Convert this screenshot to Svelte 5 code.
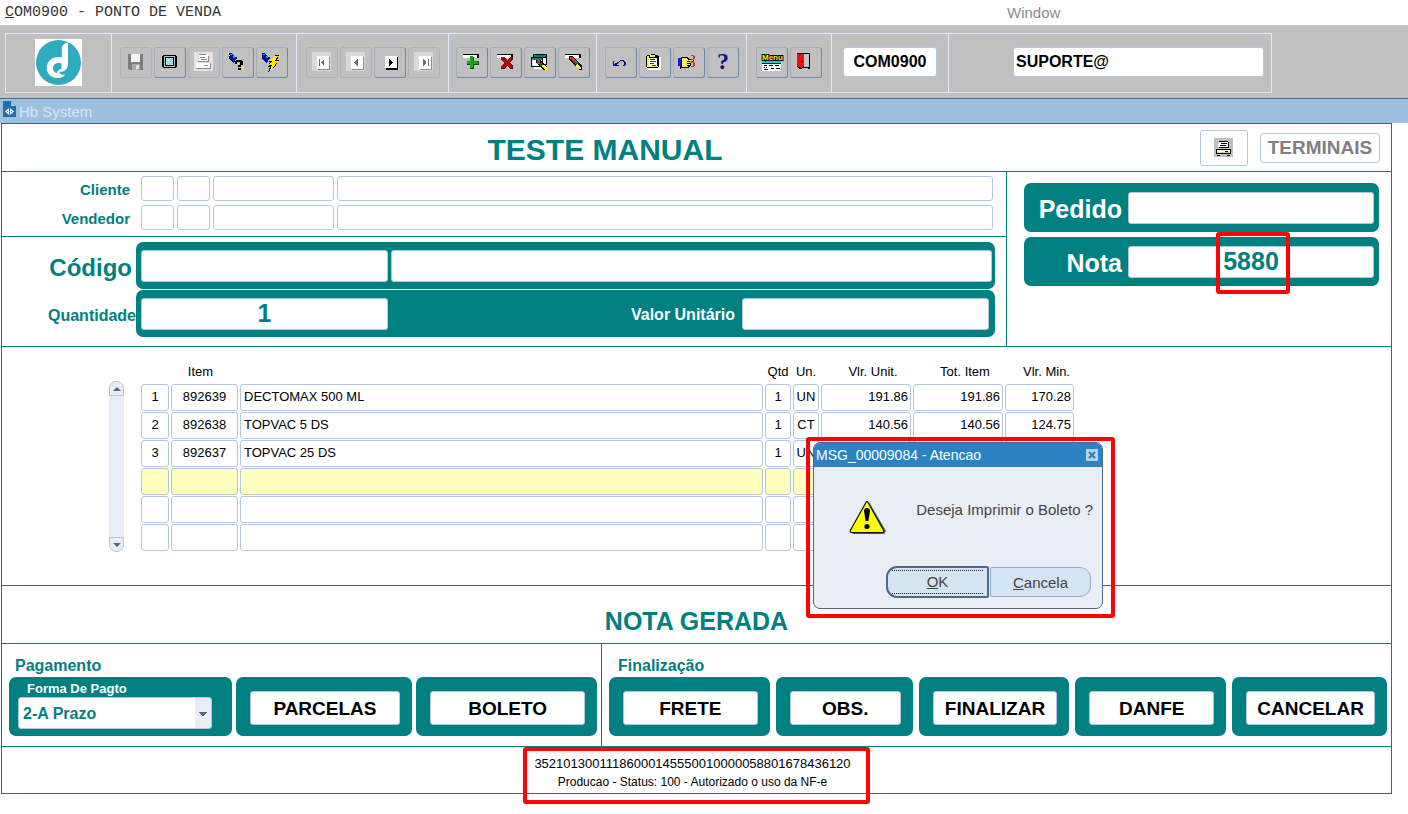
<script>
  const BLACK = '#000';
  const page = [['#8a8a8a', 'M6 5h12v13H6z'], ['#fff', 'M5 4h12v13H5z']];
  const pageOn = [[BLACK, 'M6 5h12v13H6z'], ['#fff', 'M5 4h12v12H5z']];
  const faded = ['#d9d9d9', 'M0 0h19v19H0z'];
  const bar = [[BLACK, 'M1 2h16v1H1zM15 3h2v3h-2z'], ['#fff', 'M1 3h14v3H1z']];

  // every icon is a list of [fill, path] layers on a 20x20 grid
  const icons = {
    save: [['#7d7d7d', 'M2 2h15v16H3l-1-1z'], ['#f4f4f4', 'M5 2h9v8H5z'], ['#a8a8a8', 'M6 12h8v6H6z'], ['#e0e0e0', 'M10 13h3v4h-3z']],
    monitor: [[BLACK, 'M3 3h13v1h1v11h-1v1H3v-1H2V4h1z'], ['#b8c0c0', 'M4 4h11v11H4z'], [BLACK, 'M5 5h9v9H5z'], ['#8fe0e6', 'M6 6h7v7H6z'], ['#fff', 'M6 6h1v1H6zM8 8h1v1H8zM10 6h1v1h-1zM12 8h1v1h-1zM6 10h1v1H6zM10 10h1v1h-1zM8 12h1v1H8zM12 12h1v1h-1z']],
    printOff: [['#e2e2e2', 'M0 0h19v19H0z'], ['#fff', 'M5 2h9v7H5zM2 11h15v5H2z'], ['#8a8a8a', 'M5 2h7v1H5zM6 5h5v1H6zM7 7h6v1H7zM14 4h1v6h-1zM4 9h11v1H4zM2 16h15v1H2zM16 11h1v5h-1zM10 13h4v1h-4z']],
    query: [['#08108c', 'M1 1h2l3 2v2h3v1l-3 5-2-1-3-3z'], ['#fff', 'M0 1h1v1H0zM1 3h1v1H1zM0 5h1v1H0z'], ['#20a8c8', 'M5 4h2v2H5zM2 2h2v1H2z'], ['#e5dc70', 'M9 12h1v1H9zM11 14h1v1h-1zM13 12h1v1h-1zM15 10h1v1h-1zM15 14h1v1h-1zM9 16h1v1H9zM13 16h1v1h-1zM15 18h1v1h-1zM11 18h1v1h-1zM13 14h3v4h-3z'], [BLACK, 'M8 8h6v1h1v4h-2v2h-3v-2h2v-3h-3v2H7V9h1zM10 16h3v2h-3z']],
    bolt: [['#08108c', 'M0 1h2l3 2v2h3v1l-3 5-2-1-3-3z'], ['#20a8c8', 'M4 4h2v2H4zM1 2h2v1H1z'], [BLACK, 'M13 3h4l-2 5h2l-3 5h1l-9 7 2-5H6l2-5H7z'], ['#ffee00', 'M12 4h4l-3 5h3l-4 4h2l-6 5 2-5H7l3-4H8z']],
    first: [faded, ...page, ['#6e6e6e', 'M7 7h1v7H7zM12 7v7l-3-3v-1z']],
    prev: [faded, ...page, ['#6e6e6e', 'M12 7v7l-4-3v-1z']],
    next: [...pageOn, [BLACK, 'M9 7v7l4-3v-1z']],
    last: [faded, ...page, ['#6e6e6e', 'M14 7h1v7h-1zM9 7v7l3-3v-1z']],
    add: [...bar, ['#064d06', 'M8 5h4v4h5v4h-5v4H8v-4H5V9h3z'], ['#16a516', 'M8 4h3v5h5v3h-5v4H8v-4H5V9h3z']],
    remove: [...bar, ['#5f0505', 'M5 5h3l3 3 3-3h3v2l-3 4 3 3v3h-3l-3-3-3 3H5v-2l4-4-4-4z'], ['#a80808', 'M5 5h3l3 3 3-3h2v2l-3 4 3 3v2h-2l-3-3-3 3H5v-2l3-3-3-4z']],
    clearForm: [[BLACK, 'M3 2h14v11H3z'], ['#0b7c80', 'M4 3h12v2H4z'], ['#fff', 'M4 6h12v6H4z'], [BLACK, 'M1 5h12v10H1z'], ['#0b7c80', 'M2 6h10v2H2z'], ['#fff', 'M2 8h10v6H2zM4 15h9v2H4z'], [BLACK, 'M6 8h4l7 7v3h-3l-8-7z'], ['#e0244c', 'M7 8h3v4H7z'], ['#128012', 'M10 11h2v3h-2z'], ['#ffee22', 'M12 13h2l3 3v2h-2l-3-3z']],
    clearField: [...bar, [BLACK, 'M5 4h4l9 10v4h-3L5 8z'], ['#e0244c', 'M6 5h3l2 3-2 2-3-3z'], ['#128012', 'M11 8l3 3-2 2-3-3z'], ['#ffee22', 'M13 12l4 3v2h-2l-4-3z']],
    undo: [['#10108c', 'M2 9h1v3h1v-1h2v-1h2V9h1V8h4v1h1v1h1v3h-1v1h-2v-1h1v-3h-1V9h-3v1H8v1H7v1H6v1h2v1H2z']],
    list: [['#fff', 'M3 5h13v13H3z'], [BLACK, 'M2 3h3l1-1h3l1 1h3v1h1v11h-1v1H2v-1H1V4h1z'], ['#f1ea7a', 'M2 4h2v10h9v1H2zM5 3h5v2H5z'], ['#fff', 'M4 6h8v8H4z'], ['#2030b0', 'M5 7h5v1H5zM5 9h6v1H5zM5 11h4v1H5zM7 13h4v1H7z']],
    hand: [[BLACK, 'M2 5h6l2 2h5v3H9l3 1v2l-2 3H3l-2 1z'], ['#1020c8', 'M-1 6h3v8h-3z'], ['#f6ec60', 'M3 6h4l2 2h5v1H8v1h3v1H8v1h3v1H8v1h1v1H3z'], ['#d83030', 'M12 3h3v1h1v3h-1v1h-3V7h2V4h-2zM12 10h3v1h1v3h-1v1h-3v-1h2v-3h-2zM11 9h4v1h-4z']],
    help: [],
    menu: [['#20c8d8', 'M0 9h19v2H0z'], [BLACK, 'M0 11h19v1H0z'], ['#fff', 'M0 12h19v7H0z'], [BLACK, 'M2 13h3v1H2zM7 13h4v1H7zM13 13h4v1h-4zM2 15h1v1H2zM4 15h1v1H4zM2 17h4v1H2zM9 16h3v1H9zM14 16h4v1h-4z']],
    exit: [[BLACK, 'M1 1h13v16h-2v-1H8l-4 1-3-2z'], ['#c4c4c4', 'M8 2h5v13H8z'], ['#ee1010', 'M1 2h7v12l-3 2-4-2z'], ['#7a0808', 'M5 9h2v1H5z']],
    print: [['#c0c0c0', 'M0 0h19v19H0z'], [BLACK, 'M5 3h9v1h1v6H5zM2 11h15v5H2zM3 17h3v1H3zM13 17h3v1h-3z'], ['#fff', 'M5 4h9v5H4zM3 12h13v2H3z'], [BLACK, 'M7 5h6v1H7zM6 7h6v1H6z'], ['#d8d080', 'M3 14h13v1H3z'], [BLACK, 'M11 13h3v1h-3z']],
  };

  const toolGroups = [
    [['save', 'Salvar', true], ['monitor', 'Tela'], ['printOff', 'Imprimir', true], ['query', 'Entrar consulta'], ['bolt', 'Executar consulta']],
    [['first', 'Primeiro', true], ['prev', 'Anterior', true], ['next', 'Proximo'], ['last', 'Ultimo', true]],
    [['add', 'Inserir'], ['remove', 'Excluir'], ['clearForm', 'Limpar tela'], ['clearField', 'Limpar registro']],
    [['undo', 'Desfazer'], ['list', 'Lista'], ['hand', 'Editar'], ['help', 'Ajuda']],
    [['menu', 'Menu'], ['exit', 'Sair']],
  ];

  const columns = [
    { key: 'seq', title: '', align: 'center' },
    { key: 'item', title: 'Item', align: 'center' },
    { key: 'desc', title: '', align: 'start' },
    { key: 'qtd', title: 'Qtd', align: 'center' },
    { key: 'un', title: 'Un.', align: 'center' },
    { key: 'unit', title: 'Vlr. Unit.', align: 'end' },
    { key: 'total', title: 'Tot. Item', align: 'end' },
    { key: 'min', title: 'Vlr. Min.', align: 'end' },
  ];

  let rows = $state([
    { seq: '1', item: '892639', desc: 'DECTOMAX 500 ML', qtd: '1', un: 'UN', unit: '191.86', total: '191.86', min: '170.28' },
    { seq: '2', item: '892638', desc: 'TOPVAC 5 DS', qtd: '1', un: 'CT', unit: '140.56', total: '140.56', min: '124.75' },
    { seq: '3', item: '892637', desc: 'TOPVAC 25 DS', qtd: '1', un: 'UN', unit: '', total: '', min: '' },
    {}, {}, {},
  ]);
  let current = $state(3);
  let showDialog = $state(true);
  let forma = $state('2-A Prazo');

  const finalActions = ['FRETE', 'OBS.', 'FINALIZAR', 'DANFE', 'CANCELAR'];
</script>

{#snippet icon(name)}
  <svg class="icon" viewBox="0 0 20 20" width="20" height="20" aria-hidden="true">
    {#each icons[name] as [fill, d]}
      <path {fill} {d} />
    {/each}
    {#if name === 'menu'}
      <text class="menu-text" x="0" y="8">Menu</text>
    {:else if name === 'help'}
      <text class="help-text" x="10" y="17">?</text>
    {/if}
  </svg>
{/snippet}

<div class="app">
  <nav class="menubar">
    <a href="#form" class="program"><u>C</u>OM0900 - PONTO DE VENDA</a>
    <a href="#window" class="window">Window</a>
  </nav>

  <div class="toolbar">
    <div class="tools">
      <div class="group">
        <svg class="logo" viewBox="0 0 47 47" width="47" height="47" role="img" aria-label="Logo">
          <rect width="47" height="47" fill="#fff" />
          <circle cx="23.5" cy="23.5" r="22.5" fill="#2eabbf" />
          <path fill="#fff" d="M33 3.500c-3 .3-6 2.500-6.200 6V18.500c-8-2-15 3-15 10.500 0 6 4.500 10 11 10 3.500 0 6-1.500 7.500-3.500-3 .8-5.300-.3-5.800-2.500 5 0 8.500-3 8.500-8z" />
          <path fill="#2eabbf" d="M26.500 24.500c-4.500-1.500-8.500.8-8.500 4.700 0 2.800 1.800 4.600 4.200 4.800 0-2 1.200-3.500 4.300-4.200z" />
        </svg>
      </div>
      {#each toolGroups as group}
        <div class="group">
          {#each group as [name, label, off]}
            <button class="tool" class:off aria-label={label} disabled={off}>{@render icon(name)}</button>
          {/each}
        </div>
      {/each}
      <div class="group"><input class="program-code" aria-label="Programa" value="COM0900" /></div>
      <div class="group user"><input class="user-name" aria-label="Usuario" value="SUPORTE@" /></div>
    </div>
  </div>

  <header class="titlebar">
    <svg viewBox="0 0 13 16" width="13" height="16" aria-hidden="true">
      <path fill="#1d6fb0" d="M0 0h8l5 5v11H0z" />
      <path fill="#9cc6e8" d="M8 0l5 5H8z" />
      <path fill="#fff" d="M6 7v7l-4-3.500zM7 7v7l4-3.500z" />
      <path fill="#1d6fb0" d="M5 9.500v2l-1.200-1zM8 9.500v2l1.200-1z" />
    </svg>
    <span>Hb System</span>
  </header>

  <main class="form" id="form">
    <section class="heading">
      <h1>TESTE MANUAL</h1>
      <button class="print" aria-label="Imprimir">{@render icon('print')}</button>
      <button class="terminals">TERMINAIS</button>
    </section>

    <section class="top">
      <div class="sale">
        <div class="people">
          {#each ['Cliente', 'Vendedor'] as who}
            <label for={who}>{who}</label>
            <input id={who} />
            <input aria-label="{who} filial" />
            <input aria-label="{who} documento" />
            <input aria-label="{who} nome" />
          {/each}
        </div>
        <div class="entry">
          <label class="big" for="codigo">Código</label>
          <div class="band">
            <input id="codigo" class="short" />
            <input aria-label="Descrição" />
          </div>
          <label class="medium" for="qtd">Quantidade</label>
          <div class="band spread">
            <input id="qtd" class="short number" value="1" />
            <label for="valor">Valor Unitário</label>
            <input id="valor" class="short" />
          </div>
        </div>
      </div>
      <div class="docs">
        <div class="band doc">
          <label for="pedido">Pedido</label>
          <input id="pedido" class="number" />
        </div>
        <div class="band doc">
          <label for="nota">Nota</label>
          <div class="marked">
            <input id="nota" class="number" value="5880" />
            <span class="mark nota-mark"></span>
          </div>
        </div>
      </div>
    </section>

    <section class="items">
      <div class="scroll">
        <button class="up" aria-label="Subir" onclick={() => (current = Math.max(0, current - 1))}></button>
        <div class="track"></div>
        <button class="down" aria-label="Descer" onclick={() => (current = Math.min(rows.length - 1, current + 1))}></button>
      </div>
      <table>
        <thead>
          <tr>
            {#each columns as col}
              <th class="{col.key} {col.align}">{col.title}</th>
            {/each}
          </tr>
        </thead>
        <tbody>
          {#each rows as row, i}
            <tr class:current={i === current}>
              {#each columns as col}
                <td>
                  <input class={col.align} aria-label="{col.title || col.key} {i + 1}" bind:value={row[col.key]} onfocus={() => (current = i)} />
                </td>
              {/each}
            </tr>
          {/each}
        </tbody>
      </table>
    </section>

    <section class="status">
      <h2>NOTA GERADA</h2>
    </section>

    <section class="actions">
      <div class="panel payment">
        <h3>Pagamento</h3>
        <div class="boxes">
          <div class="box choose">
            <label for="forma">Forma De Pagto</label>
            <select id="forma" bind:value={forma}>
              <option>2-A Prazo</option>
              <option>1-A Vista</option>
            </select>
          </div>
          <div class="box"><button>PARCELAS</button></div>
          <div class="box"><button>BOLETO</button></div>
        </div>
      </div>
      <div class="panel finish">
        <h3>Finalização</h3>
        <div class="boxes">
          {#each finalActions as action}
            <div class="box"><button>{action}</button></div>
          {/each}
        </div>
      </div>
    </section>

    <footer>
      <div class="nfe">
        <p>35210130011186000145550010000058801678436120</p>
        <p class="nfe-status">Producao - Status: 100 - Autorizado o uso da NF-e</p>
        <span class="mark nfe-mark"></span>
      </div>
    </footer>

    {#if showDialog}
      <div class="dialog-mark">
        <div class="dialog" role="dialog" aria-labelledby="dialog-title">
          <div class="dialog-title">
            <span id="dialog-title">MSG_00009084 - Atencao</span>
            <button aria-label="Fechar" onclick={() => (showDialog = false)}>
              <svg viewBox="0 0 12 12" width="12" height="12" aria-hidden="true">
                <path d="M3 3l6 6M9 3l-6 6" stroke="#3a78ad" stroke-width="2" />
              </svg>
            </button>
          </div>
          <div class="dialog-body">
            <svg viewBox="0 0 38 35" width="38" height="35" aria-hidden="true">
              <path fill="#555" d="M20 2l17 29-2 3H4l-2-2z" />
              <path fill="#ff0" stroke="#111" stroke-width="1.200" stroke-linejoin="round" d="M18.500 1.500L35 31l-1 1.500H2L1 31 17.500 1.500z" />
              <path fill="#000" d="M15 11c0-4 6-4 6 0l-1.600 10h-2.800z" />
              <circle cx="18" cy="26.500" r="2.600" />
            </svg>
            <p>Deseja Imprimir o Boleto ?</p>
          </div>
          <div class="dialog-buttons">
            <button class="ok" onclick={() => (showDialog = false)}><span><u>O</u>K</span></button>
            <button class="cancel" onclick={() => (showDialog = false)}><u>C</u>ancela</button>
          </div>
        </div>
      </div>
    {/if}
  </main>
</div>

<style>
  :global(body) {
    background: #fff;
    font-family: "Liberation Sans", Arial, sans-serif;
  }

  * {
    box-sizing: border-box;
  }

  .app {
    display: flow-root;
    min-height: 100vh;
  }

  h1, h2, h3, p {
    margin: 0;
  }

  button, input, select {
    font-family: inherit;
    margin: 0;
    padding: 0;
    border: 1px solid #b5c7de;
    border-radius: 3px;
    background: #fff;
    color: #000;
    outline: none;
  }

  input {
    min-width: 0;
    width: 100%;
  }

  .menubar {
    display: grid;
    grid-template-columns: 1002px 1fr;
    align-items: center;
    height: 25px;
    padding-left: 5px;
  }

  .menubar a {
    text-decoration: none;
  }

  .program {
    font: 15px "Liberation Mono", "Courier New", monospace;
    color: #333;
  }

  .window {
    font-size: 15px;
    color: #8c8c8c;
  }

  .toolbar {
    background: #c0c0c0;
    padding: 8px 5px 5px;
    border-bottom: 1px solid #4a6890;
  }

  .tools {
    display: grid;
    grid-template-columns: 106px 185px 152px 148px 150px 85px 117px 322px;
    width: max-content;
    height: 60px;
    border: 1px solid #e3ebf8;
  }

  .group {
    display: flex;
    align-items: center;
    justify-content: center;
    gap: 2px;
    padding-bottom: 2px;
    border-right: 1px solid #e3ebf8;
  }

  .group:last-child {
    border-right: none;
  }

  .tool {
    display: flex;
    justify-content: center;
    width: 32px;
    height: 31px;
    padding-top: 4px;
    background: none;
    border-color: #a5aeb8 #7088a8 #7088a8 #a5aeb8;
  }

  .tool.off {
    border-color: #adb2b8;
  }

  .icon {
    display: block;
    overflow: visible;
    shape-rendering: crispEdges;
  }

  .menu-text {
    font: bold 8px "Liberation Sans", Arial, sans-serif;
    fill: #ffee00;
    stroke: #000;
    stroke-width: 2px;
    paint-order: stroke;
  }

  .help-text {
    font: bold 24px "Liberation Serif", "Times New Roman", serif;
    fill: #10108c;
    text-anchor: middle;
  }

  .program-code {
    width: 94px;
    height: 30px;
    font-size: 16px;
    font-weight: bold;
    text-align: center;
  }

  .user {
    justify-content: flex-end;
    padding-right: 7px;
  }

  .user-name {
    width: 251px;
    height: 30px;
    padding-left: 2px;
    font-size: 16px;
    font-weight: bold;
  }

  .titlebar {
    display: flex;
    gap: 3px;
    height: 24px;
    padding: 2px 3px;
    background: #9fbfdf;
    color: #dce9f7;
    font-size: 15px;
    line-height: 22px;
  }

  .form {
    position: relative;
    margin: 0 16px 0 1px;
    border: 1px solid #008080;
    color: #008080;
  }

  .form > section {
    border-bottom: 1px solid #008080;
  }

  .heading {
    display: flex;
    align-items: center;
    gap: 12px;
    height: 48px;
    padding: 0 11px 0 20px;
  }

  h1 {
    flex: 1;
    font-size: 30px;
    line-height: 36px;
    padding-top: 4px;
    text-align: center;
  }

  .print {
    display: flex;
    align-items: center;
    justify-content: center;
    width: 48px;
    height: 36px;
  }

  .terminals {
    width: 120px;
    height: 30px;
    color: #808080;
    font-size: 19px;
    font-weight: bold;
  }

  .top {
    display: grid;
    grid-template-columns: 1fr 384px;
  }

  .sale {
    border-right: 1px solid #008080;
  }

  .people {
    display: grid;
    grid-template-columns: 136px 33px 33px 121px 1fr;
    column-gap: 3px;
    row-gap: 4px;
    align-items: center;
    padding: 4px 13px 6px 0;
    border-bottom: 1px solid #008080;
  }

  .people input {
    height: 25px;
  }

  .people label {
    padding: 2px 8px 0 0;
    font-size: 15px;
    font-weight: bold;
    text-align: right;
  }

  .entry {
    display: grid;
    grid-template-columns: 130px 1fr;
    gap: 1px 4px;
    align-items: center;
    padding: 5px 11px 9px 0;
    font-weight: bold;
    text-align: right;
  }

  .big {
    padding-top: 4px;
    font-size: 24px;
  }

  .medium {
    padding-top: 4px;
    font-size: 16px;
    white-space: nowrap;
    margin-right: -4px;
  }

  .band {
    display: flex;
    align-items: center;
    gap: 3px;
    height: 47px;
    padding: 0 3px 0 5px;
    border-radius: 7px;
    background: #008080;
    color: #fff;
    font-size: 16px;
    font-weight: bold;
  }

  .band input {
    height: 32px;
  }

  .band label {
    padding-top: 3px;
  }

  .band .short {
    width: 247px;
    flex: none;
  }

  .spread {
    padding-right: 6px;
  }

  .spread label {
    flex: 1;
    padding-right: 4px;
  }

  .number {
    color: #008080;
    font-size: 25px;
    font-weight: bold;
    text-align: center;
  }

  .docs {
    display: flex;
    flex-direction: column;
    gap: 5px;
    padding: 11px 12px 0 17px;
  }

  .doc {
    display: grid;
    grid-template-columns: 1fr 246px;
    gap: 6px;
    height: 49px;
    padding: 0 5px 0 8px;
    font-size: 25px;
    text-align: right;
  }

  .marked {
    position: relative;
    display: flex;
  }

  .mark {
    position: absolute;
    border: 4px solid #fa0505;
    border-radius: 3px;
    pointer-events: none;
  }

  .nota-mark {
    left: 88px;
    top: -14px;
    width: 74px;
    height: 62px;
  }

  .items {
    display: flex;
    gap: 15px;
    padding: 15px 315px 33px 107px;
    color: #000;
  }

  .scroll {
    display: flex;
    flex-direction: column;
    width: 15px;
    flex: none;
    margin-top: 19px;
  }

  .track {
    flex: 1;
    background: #e9edf5;
  }

  .scroll button {
    height: 15px;
    background: #e9edf5;
    display: flex;
    align-items: center;
    justify-content: center;
  }

  .scroll .up {
    border-radius: 7px 7px 0 0;
  }

  .scroll .down {
    border-radius: 0 0 7px 7px;
  }

  .scroll button::after {
    content: "";
    border: 4px solid transparent;
  }

  .scroll .up::after {
    border-top-width: 0;
    border-bottom-color: #5c6670;
  }

  .scroll .down::after {
    border-bottom-width: 0;
    border-top-color: #5c6670;
  }

  table {
    flex: 1;
    table-layout: fixed;
    border-spacing: 2px 1px;
    font-size: 13px;
  }

  th {
    height: 20px;
    padding: 0 0 4px;
    font-weight: normal;
    white-space: nowrap;
  }

  th.item {
    padding-right: 8px;
  }

  th.end {
    padding-left: 14px;
  }

  .seq { width: 28px; }
  .item { width: 67px; }
  .qtd { width: 26px; }
  .un { width: 26px; }
  .unit { width: 90px; }
  .total { width: 90px; }
  .min { width: 69px; }

  td {
    padding: 0;
  }

  td input {
    display: block;
    height: 27px;
    padding: 0 2px 2px 3px;
    font-size: 13px;
  }

  td input.center {
    padding: 0 0 2px;
    text-align: center;
  }

  td input.end {
    text-align: right;
  }

  .current input {
    background: #ffffc0;
  }

  .status {
    padding: 21px 0 8px;
    text-align: center;
  }

  h2 {
    font-size: 25px;
    line-height: 28px;
  }

  .actions {
    display: grid;
    grid-template-columns: 600fr 789fr;
  }

  .panel {
    padding: 13px 4px 10px 7px;
  }

  .payment {
    border-right: 1px solid #008080;
  }

  h3 {
    padding-left: 6px;
    margin-bottom: 2px;
    font-size: 16px;
    line-height: 18px;
  }

  .finish h3 {
    padding-left: 9px;
  }

  .boxes {
    display: grid;
    grid-template-columns: 223fr 177fr 181fr;
    gap: 4px;
  }

  .finish .boxes {
    grid-template-columns: 161fr 137fr 151fr 151fr 155fr;
    gap: 6px;
  }

  .box {
    height: 59px;
    padding: 14px 12px 11px 14px;
    border-radius: 7px;
    background: #008080;
  }

  .box button {
    width: 100%;
    height: 34px;
    padding-top: 2px;
    font-size: 19px;
    font-weight: bold;
  }

  .choose {
    padding: 4px 20px 7px 9px;
    color: #fff;
    font-size: 13px;
    font-weight: bold;
  }

  .choose label {
    display: block;
    padding-left: 9px;
    line-height: 16px;
  }

  select {
    appearance: none;
    width: 100%;
    height: 32px;
    padding: 0 20px 0 4px;
    color: #008080;
    font-size: 16px;
    font-weight: bold;
    background:
      conic-gradient(from -45deg at 50% 100%, #5c6670 90deg, transparent 0) right 4px top 14px / 8px 4px no-repeat,
      linear-gradient(#e9edf5, #e9edf5) right / 16px 100% no-repeat,
      #fff;
  }

  footer {
    display: flex;
    justify-content: center;
    padding: 8px 0 2px;
    color: #000;
    font-size: 13px;
    line-height: 18px;
    text-align: center;
  }

  .nfe {
    position: relative;
    padding-right: 8px;
  }

  .nfe-status {
    font-size: 12px;
  }

  .nfe-mark {
    inset: -8px -11px -13px;
  }

  .dialog-mark {
    position: absolute;
    top: 313px;
    right: 276px;
    width: 309px;
    padding: 1px 8px 5px 3px;
    border: 4px solid #fa0505;
    border-radius: 3px;
  }

  .dialog {
    border: 1px solid #4a6890;
    border-radius: 7px;
    background: #e9edf5;
    color: #444;
    font-size: 15px;
    overflow: hidden;
  }

  .dialog-title {
    display: flex;
    align-items: center;
    justify-content: space-between;
    height: 24px;
    padding: 0 4px 0 2px;
    background: #2c83c3;
    color: #fff;
    font-size: 14px;
  }

  .dialog-title button {
    display: flex;
    width: 12px;
    height: 12px;
    border: none;
    border-radius: 0;
    background: #b4d4ec;
  }

  .dialog-body {
    display: flex;
    justify-content: space-between;
    padding: 33px 9px 0 35px;
  }

  .dialog-body p {
    line-height: 20px;
  }

  .dialog-buttons {
    display: flex;
    justify-content: flex-end;
    align-items: center;
    gap: 1px;
    padding: 31px 11px 10px 0;
  }

  .dialog-buttons button {
    width: 101px;
    height: 30px;
    background: #d5e4f3;
    border-color: #93a9c2;
    color: #444;
    font-size: 15px;
  }

  .dialog-buttons .ok {
    width: 103px;
    height: 32px;
    padding: 2px 4px;
    border: 2px solid #4a6890;
    border-radius: 11px 2px 2px 11px;
  }

  .ok span {
    display: block;
    line-height: 22px;
    border: 1px dotted #222;
    border-width: 1px 0;
  }

  .dialog-buttons .cancel {
    border-radius: 2px 11px 11px 2px;
  }
</style>
